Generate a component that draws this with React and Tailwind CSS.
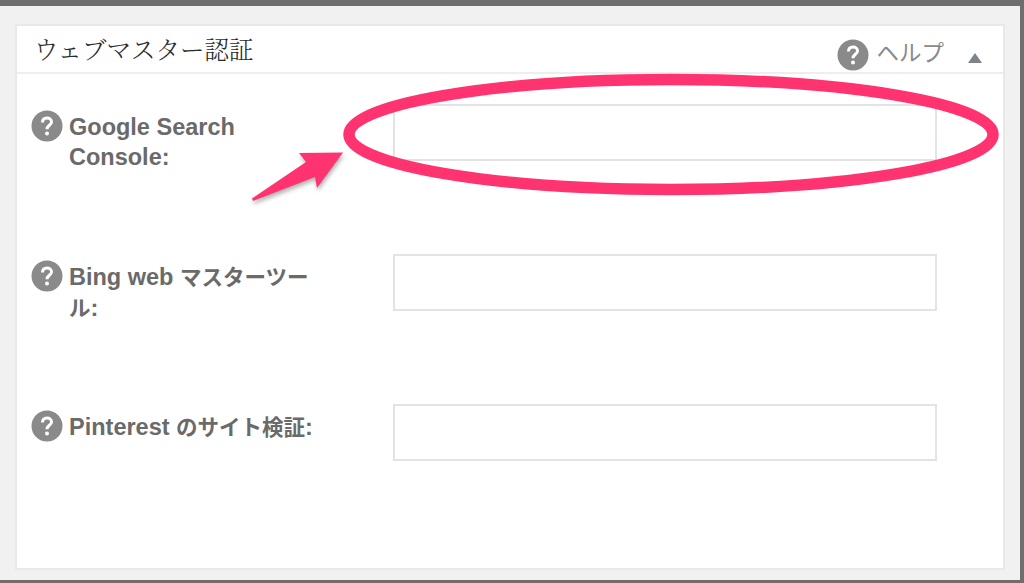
const sans = "font-['Liberation_Sans','Noto_Sans_CJK_JP',sans-serif]";

function HelpIcon({ className = "" }) {
  return (
    <svg className={`h-[32px] w-[32px] shrink-0 ${className}`} viewBox="0 0 32 32" fill="none">
      <circle cx="16" cy="16" r="15.5" fill="#8a8a8a" />
      <path
        d="M11.5 12.5C11.5 9.6 13.4 8 16 8c2.6 0 4.5 1.5 4.5 3.9 0 3.2-4.5 3.6-4.5 7.3"
        stroke="#fff"
        strokeWidth="3"
      />
      <circle cx="16" cy="23.6" r="2" fill="#fff" />
    </svg>
  );
}

function Row({ children }) {
  return (
    <div className="flex h-[150px] items-start">
      <HelpIcon className="mt-[6px]" />
      <label className="ml-[6px] mt-[8px] w-[252px] text-[23.5px] font-bold leading-[30px] text-[#6a6a6a]">
        {children}
      </label>
      <input
        type="text"
        className="ml-[72px] h-[57px] w-[544px] border-2 border-[#e3e3e3] bg-white"
      />
    </div>
  );
}

export default function App() {
  return (
    <div className={`relative h-[583px] w-[1024px] overflow-hidden bg-[#6e6e6e] pb-[3px] pr-[4px] pt-[6px] ${sans}`}>
      <div className="h-full bg-[#f1f1f1] pl-[15px] pt-[18px]">
        <div className="h-[546px] w-[990px] border-2 border-[#e8e8e8] bg-white">
          <div className="flex h-[48px] items-start justify-between border-b-2 border-[#eeeeee] pl-[17px] pr-[21px]">
            <h2 className="font-['Noto_Serif_CJK_JP','Noto_Sans_CJK_JP',serif] text-[24.5px] font-light leading-[45px] text-[#2a2a2a]">
              ウェブマスター認証
            </h2>
            <div className="flex items-center pt-[11px]">
              <HelpIcon />
              <span className="ml-[7px] mb-[2px] text-[22.5px] text-[#8a8a8a]">ヘルプ</span>
              <span className="ml-[24px] mt-[6px] h-0 w-0 border-x-[7px] border-b-[10px] border-x-transparent border-b-[#7d8489]" />
            </div>
          </div>
          <div className="pl-[14px] pt-[30px]">
            <Row>Google Search Console:</Row>
            <Row>
              Bing web <span className="text-[21.5px]">マスターツー</span>
              <br />
              <span className="text-[21.5px]">ル</span>:
            </Row>
            <Row>
              Pinterest <span className="text-[21.5px]">のサイト検証</span>:
            </Row>
          </div>
        </div>
      </div>

      <svg className="absolute left-0 top-0 h-[583px] w-[1024px]" viewBox="0 0 1024 583" fill="none">
        <ellipse cx="671" cy="134.5" rx="322" ry="55" stroke="#ff3370" strokeWidth="11.5" />
        <path
          className="drop-shadow-[1px_3px_2px_rgba(0,0,0,0.3)]"
          d="M252 198.5 L253 201 L315 177 L317 188 L343 152.5 L299 153 L306 162 Z"
          fill="#ff3370"
        />
      </svg>
    </div>
  );
}
